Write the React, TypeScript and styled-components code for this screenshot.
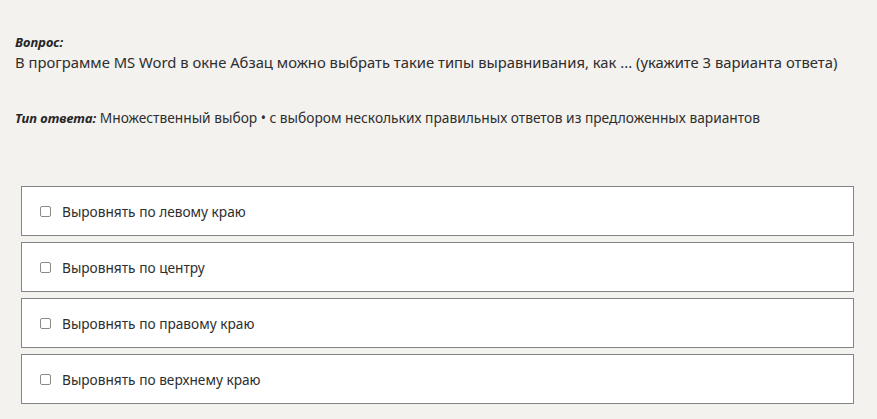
import React, { useState } from "react";
import styled, { createGlobalStyle } from "styled-components";

const GlobalStyle = createGlobalStyle`
  html, body {
    margin: 0;
    padding: 0;
    background: #f3f2ef;
  }
  body {
    font-family: "Noto Sans", "Open Sans", sans-serif;
    color: #2b2b2b;
  }
`;

const options = [
  "Выровнять по левому краю",
  "Выровнять по центру",
  "Выровнять по правому краю",
  "Выровнять по верхнему краю",
];

const App = () => {
  const [checked, setChecked] = useState<string[]>([]);

  const handleCheck = (value: string) => {
    if (checked.includes(value)) {
      setChecked(checked.filter((el) => el !== value));
    } else {
      setChecked([...checked, value]);
    }
  };

  return (
    <Page>
      <GlobalStyle />
      <Question>
        <Label>Вопрос:</Label>
        <QuestionText>
          В программе MS Word в окне Абзац можно выбрать такие типы
          выравнивания, как ... (укажите 3 варианта ответа)
        </QuestionText>
      </Question>
      <AnswerType>
        <Label as="span">Тип ответа:</Label> Множественный выбор • с выбором
        нескольких правильных ответов из предложенных вариантов
      </AnswerType>
      <OptionList>
        {options.map((item) => (
          <Option key={item}>
            <Checkbox
              type="checkbox"
              checked={checked.includes(item)}
              onChange={() => handleCheck(item)}
            />
            {item}
          </Option>
        ))}
      </OptionList>
    </Page>
  );
};

const Page = styled.div`
  padding: 33px 23px 0 15px;
  height: 419px;
  box-sizing: border-box;
`;

const Question = styled.div`
  display: flex;
  flex-direction: column;
`;

const Label = styled.div`
  font-size: 13px;
  font-weight: bold;
  font-style: italic;
  line-height: 18px;
  color: #262626;
`;

const QuestionText = styled.div`
  font-size: 14.8px;
  line-height: 23px;
  color: #2e2e2e;
`;

const AnswerType = styled.div`
  margin-top: 35px;
  font-size: 13.75px;
  line-height: 18px;
  color: #2e2e2e;
`;

const OptionList = styled.div`
  display: flex;
  flex-direction: column;
  gap: 6px;
  margin: 59px 0 0 6px;
`;

const Option = styled.label`
  display: flex;
  align-items: center;
  height: 50px;
  box-sizing: border-box;
  padding-left: 18px;
  background: #ffffff;
  border: 1px solid #858585;
  font-size: 13.7px;
  color: #2e2e2e;
  cursor: pointer;
`;

const Checkbox = styled.input`
  appearance: none;
  width: 11px;
  height: 11px;
  margin: 0 11px 0 0;
  border: 1px solid #8a8a8a;
  border-radius: 2px;
  background: #ffffff;
  cursor: pointer;

  &:checked {
    background: #4a4a4a;
  }
`;

export default App;
